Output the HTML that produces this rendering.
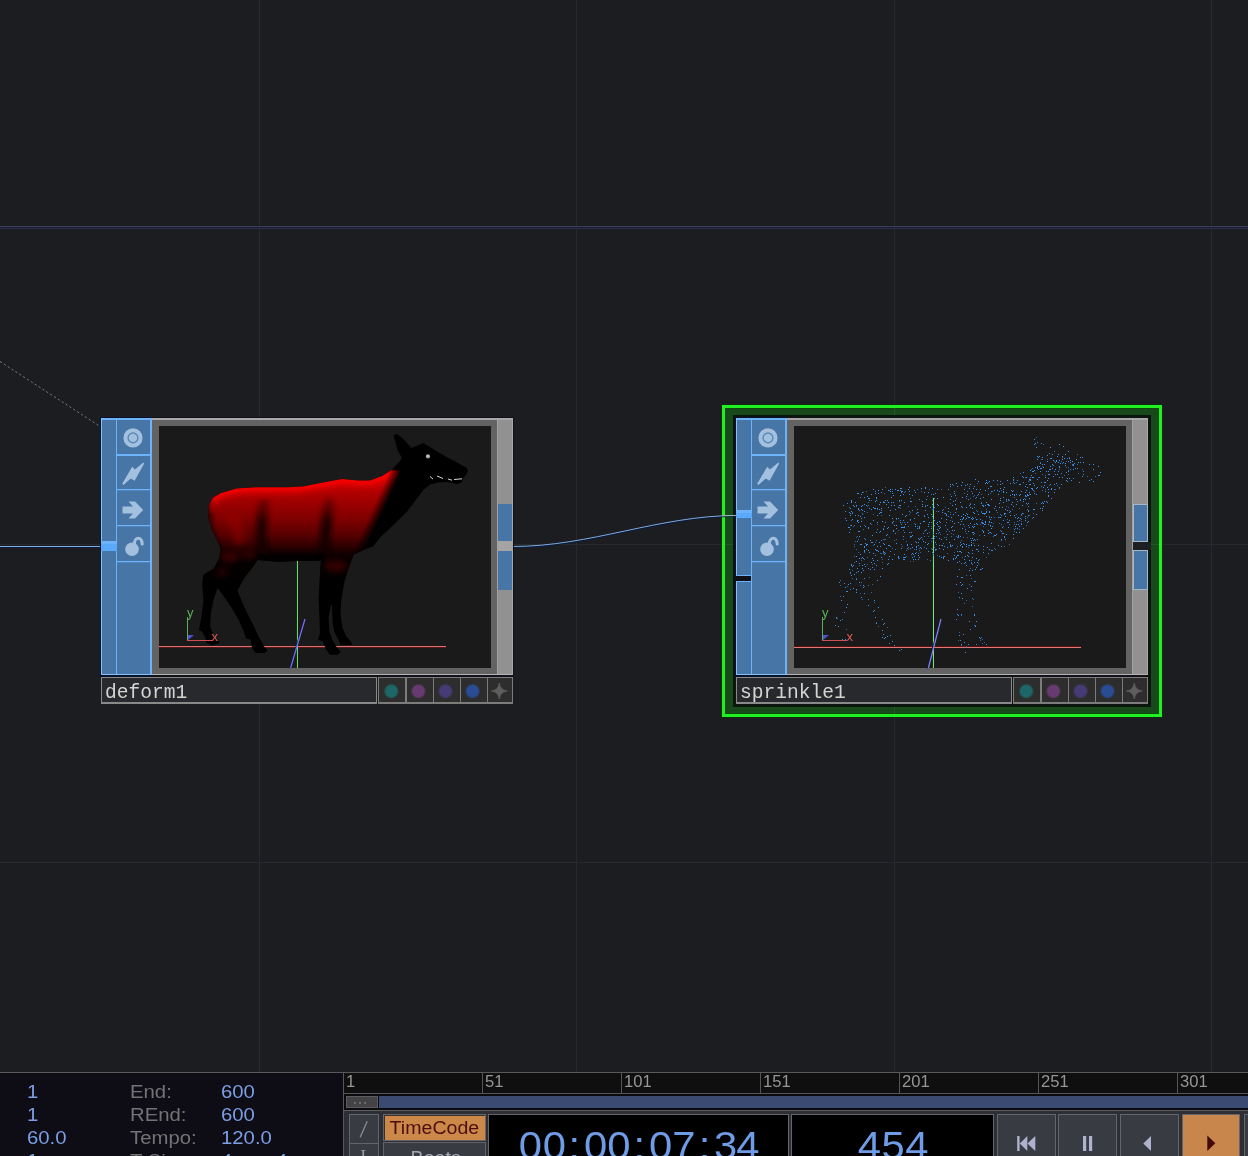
<!DOCTYPE html>
<html><head><meta charset="utf-8"><title>TouchDesigner</title>
<style>html,body{margin:0;padding:0;background:#1c1d21;overflow:hidden}svg{display:block;position:absolute;left:0;top:0}text{white-space:pre}</style>
</head><body>
<svg width="1248" height="1156" viewBox="0 0 1248 1156" shape-rendering="crispEdges">
<defs>
<linearGradient id="redv" gradientUnits="userSpaceOnUse" x1="0" y1="476" x2="0" y2="585"><stop offset="0" stop-color="#d40000"/><stop offset="0.13" stop-color="#b60000"/><stop offset="0.27" stop-color="#980000"/><stop offset="0.40" stop-color="#7e0000"/><stop offset="0.54" stop-color="#580000"/><stop offset="0.63" stop-color="#340000"/><stop offset="0.71" stop-color="#140000"/><stop offset="0.78" stop-color="#060000"/><stop offset="1" stop-color="#040000"/></linearGradient>
<linearGradient id="fadeR" gradientUnits="userSpaceOnUse" x1="371.5" y1="510.4" x2="381.5" y2="515"><stop offset="0" stop-color="#fff"/><stop offset="1" stop-color="#000"/></linearGradient>
<linearGradient id="fadeB" gradientUnits="userSpaceOnUse" x1="0" y1="560" x2="0" y2="590"><stop offset="0" stop-color="#fff"/><stop offset="1" stop-color="#000"/></linearGradient>
<linearGradient id="crz" gradientUnits="userSpaceOnUse" x1="0" y1="494" x2="0" y2="522"><stop offset="0" stop-color="#100000" stop-opacity="0"/><stop offset="1" stop-color="#100000" stop-opacity="1"/></linearGradient>
<filter id="b3" filterUnits="userSpaceOnUse" x="150" y="420" width="350" height="260"><feGaussianBlur stdDeviation="3"/></filter>
<radialGradient id="rg0"><stop offset="0" stop-color="#1d6769"/><stop offset="0.7" stop-color="#1d6769"/><stop offset="1" stop-color="#1d6769" stop-opacity="0"/></radialGradient>
<radialGradient id="rg1"><stop offset="0" stop-color="#683a72"/><stop offset="0.7" stop-color="#683a72"/><stop offset="1" stop-color="#683a72" stop-opacity="0"/></radialGradient>
<radialGradient id="rg2"><stop offset="0" stop-color="#473b76"/><stop offset="0.7" stop-color="#473b76"/><stop offset="1" stop-color="#473b76" stop-opacity="0"/></radialGradient>
<radialGradient id="rg3"><stop offset="0" stop-color="#294c94"/><stop offset="0.7" stop-color="#294c94"/><stop offset="1" stop-color="#294c94" stop-opacity="0"/></radialGradient>
<filter id="b06" x="-30%" y="-30%" width="160%" height="160%"><feGaussianBlur stdDeviation="0.7"/></filter>
<filter id="b5" x="-20%" y="-20%" width="140%" height="140%"><feGaussianBlur stdDeviation="5"/></filter>
<clipPath id="deerclip"><path d="M390.0,471.0 L382.0,476.0 L370.0,480.5 L358.0,480.5 L342.0,479.0 L323.0,482.6 L303.0,486.6 L288.4,487.3 L256.5,487.3 L236.5,488.6 L220.6,493.3 L212.6,498.0 L208.6,506.0 L208.6,518.0 L211.3,528.5 L216.6,539.0 L220.6,548.5 L219.3,557.8 L214.0,568.4 L203.3,575.0 L202.2,584.0 L203.5,600.0 L201.5,615.9 L199.6,626.5 L199.0,630.5 L201.5,631.0 L205.0,637.0 L207.0,643.0 L212.2,645.0 L219.5,643.0 L217.5,639.8 L213.0,635.0 L210.2,626.5 L210.9,613.0 L213.5,600.0 L217.5,588.0 L221.5,593.0 L230.8,606.5 L238.8,620.0 L244.0,632.0 L246.0,638.5 L250.8,639.8 L252.0,647.8 L256.0,653.0 L264.0,653.0 L267.4,650.4 L264.0,646.5 L258.8,637.0 L252.0,622.5 L244.0,606.5 L237.5,590.6 L244.0,578.6 L252.0,568.0 L257.4,560.0 L264.5,560.4 L276.5,561.8 L296.4,561.0 L321.0,560.4 L320.0,574.6 L318.6,598.5 L319.3,614.5 L320.0,633.0 L318.0,639.8 L322.6,641.0 L326.0,649.0 L330.0,654.4 L338.0,654.4 L340.5,651.7 L336.6,647.0 L332.6,641.0 L329.2,630.5 L328.6,617.0 L331.2,604.0 L332.0,606.5 L332.6,622.5 L334.6,633.0 L338.6,639.8 L340.5,645.0 L351.9,645.0 L351.2,642.4 L345.9,635.8 L342.5,627.8 L340.5,614.5 L341.2,601.0 L344.5,581.0 L349.9,564.0 L353.8,554.6 L368.5,548.0 L373.0,546.4 L381.0,536.4 L394.0,524.4 L407.5,511.0 L415.4,500.5 L423.4,490.0 L430.0,484.5 L438.0,482.5 L447.4,482.0 L456.7,484.0 L462.0,482.5 L462.7,478.5 L466.0,475.0 L468.0,471.0 L466.7,468.0 L458.0,463.0 L444.7,456.0 L431.5,448.0 L423.5,443.0 L411.5,448.0 L403.5,439.0 L397.0,434.0 L393.5,435.3 L397.5,450.0 L402.0,458.0 L399.5,462.0Z"/></clipPath>
<mask id="redmask" maskUnits="userSpaceOnUse" x="150" y="420" width="350" height="260">
<rect x="150" y="420" width="350" height="260" fill="url(#fadeR)"/>
<rect x="150" y="546" width="350" height="140" fill="url(#fadeB)" style="mix-blend-mode:multiply"/>
</mask>
</defs>
<rect width="1248" height="1156" fill="#1c1d21"/>
<rect x="259" y="0" width="1" height="1072" fill="#28292e"/>
<rect x="576" y="0" width="1" height="1072" fill="#28292e"/>
<rect x="894" y="0" width="1" height="1072" fill="#28292e"/>
<rect x="1211" y="0" width="1" height="1072" fill="#28292e"/>
<rect x="0" y="544" width="1248" height="1" fill="#28292e"/>
<rect x="0" y="862" width="1248" height="1" fill="#28292e"/>
<rect x="0" y="226" width="1248" height="1" fill="#3d3d58"/>
<rect x="0" y="227" width="1248" height="1" fill="#1b1b38"/>
<rect x="0" y="228" width="1248" height="1" fill="#2d2d48"/>
<path d="M0,361.5 L101,427" stroke="#7a7a7a" stroke-width="1" stroke-dasharray="2.2 2.4" fill="none" shape-rendering="geometricPrecision"/>
<rect x="0" y="546" width="101" height="1" fill="#78aee4"/>
<rect x="0" y="547" width="101" height="1" fill="#0a1c3e"/>
<rect x="721" y="404" width="442" height="314" fill="#0d2c10"/>
<rect x="722" y="405" width="440" height="312" fill="#20f022"/>
<rect x="725" y="408" width="434" height="306" fill="#0a4a0c"/>
<rect x="726" y="409" width="432" height="304" fill="#17491a"/>
<rect x="733" y="415" width="418" height="292" fill="#0b150d"/>
<rect x="725" y="544" width="8" height="1" fill="#27552a"/><rect x="1151" y="544" width="8" height="1" fill="#27552a"/>
<rect x="894" y="408" width="1" height="7" fill="#27552a"/><rect x="894" y="707" width="1" height="7" fill="#27552a"/>
<g shape-rendering="geometricPrecision" fill="none">
<path d="M513,547.5 C590,547.5 660,516.5 736,516.5" stroke="#0a1c3e" stroke-width="1.2"/>
<path d="M513,546.5 C590,546.5 660,515.5 736,515.5" stroke="#7caade" stroke-width="1"/>
</g>
<g transform="translate(0,0)">
<rect x="100" y="417" width="53" height="260" fill="#06122a"/>
<rect x="152" y="417" width="362" height="260" fill="#111216"/>
<rect x="152" y="418" width="361" height="257" fill="#636363"/>
<rect x="152" y="418" width="361" height="2" fill="#a8a8a8"/>
<rect x="497" y="420" width="16" height="255" fill="#919191"/>
<rect x="497" y="420" width="1" height="254" fill="#a2a2a2"/>
<rect x="152" y="674" width="361" height="1" fill="#b4b4b4"/>
<rect x="512" y="420" width="1" height="255" fill="#a8a8a8"/>
<rect x="159" y="426" width="332" height="242" fill="#1a1a1a"/>
<rect x="101" y="418" width="51" height="257" fill="#4776a6"/>
<rect x="101" y="418" width="51" height="2" fill="#6db3fb"/>
<rect x="101" y="418" width="1" height="257" fill="#86bffa"/>
<rect x="116" y="418" width="1" height="257" fill="#6db3fb"/>
<rect x="150" y="418" width="2" height="257" fill="#6db3fb"/>
<rect x="101" y="674" width="51" height="1" fill="#86bffa"/>
<rect x="117" y="454" width="33" height="2" fill="#6db3fb"/>
<rect x="117" y="489" width="33" height="1" fill="#6db3fb"/>
<rect x="117" y="490" width="33" height="1" fill="#6db3fb" opacity="0.28"/>
<rect x="117" y="525" width="33" height="1" fill="#6db3fb"/>
<rect x="117" y="526" width="33" height="1" fill="#6db3fb" opacity="0.28"/>
<rect x="117" y="561" width="33" height="1" fill="#6db3fb"/>
<rect x="117" y="562" width="33" height="1" fill="#6db3fb" opacity="0.28"/>
<g shape-rendering="geometricPrecision">
<circle cx="133" cy="437.9" r="9.6" fill="#a3c0de"/>
<circle cx="133" cy="437.9" r="4.9" fill="none" stroke="#5a89b8" stroke-width="1.4"/>
<path d="M143.3,462.4 L135,469.4 L132.2,466.8 L122.2,483.8 L123.4,485 L130.8,478.4 L134.6,480.8 L144.2,463.6 Z" fill="#a3c0de"/>
<path d="M122.5,506.5 H133 L128.5,501.5 H135 L143.2,510 L135,518.5 H128.5 L133,513.5 H122.5 Z" fill="#a3c0de"/>
<circle cx="132" cy="549.3" r="6.8" fill="#a3c0de"/>
<path d="M134.4,543.8 C134.4,536.6 142.2,536.2 142.2,544" fill="none" stroke="#a3c0de" stroke-width="3.1" stroke-linecap="round"/>
</g>
<rect x="497" y="541" width="16" height="10" fill="#a4a4a4"/>
<rect x="498" y="504" width="14" height="37" fill="#4776a6"/>
<rect x="498" y="551" width="14" height="39" fill="#4776a6"/>
<rect x="101" y="541" width="16" height="10" fill="#5aa9fd"/>
<rect x="101" y="541" width="16" height="3" fill="#6db3fb"/>
<rect x="101" y="677" width="276" height="27" fill="#898989"/>
<rect x="102" y="678" width="274" height="24" fill="#28292c"/>
<text x="105" y="698" font-family="Liberation Mono" font-size="19.6" fill="#d4d4d4">deform1</text>
<rect x="378" y="677" width="135" height="27" fill="#7c7c7c"/>
<rect x="379" y="678" width="26" height="24" fill="#2d2d2d"/>
<rect x="407" y="678" width="26" height="24" fill="#2d2d2d"/>
<rect x="434" y="678" width="26" height="24" fill="#2d2d2d"/>
<rect x="461" y="678" width="26" height="24" fill="#2d2d2d"/>
<rect x="488" y="678" width="24" height="24" fill="#2d2d2d"/>
<g shape-rendering="geometricPrecision">
<circle cx="391.3" cy="691.2" r="7.8" fill="url(#rg0)"/>
<circle cx="418.4" cy="691.2" r="7.8" fill="url(#rg1)"/>
<circle cx="445.5" cy="691.2" r="7.8" fill="url(#rg2)"/>
<circle cx="472.6" cy="691.2" r="7.8" fill="url(#rg3)"/>
<path d="M499.3,683 Q500.2,690.2 507.2,691 Q500.2,691.8 499.3,699 Q498.4,691.8 491.4,691 Q498.4,690.2 499.3,683Z" fill="#5e5e5e" stroke="#5e5e5e" stroke-width="0.8"/>
</g>
</g>
<g transform="translate(635,0)">
<rect x="100" y="417" width="53" height="260" fill="#06122a"/>
<rect x="152" y="417" width="362" height="260" fill="#111216"/>
<rect x="152" y="418" width="361" height="257" fill="#636363"/>
<rect x="152" y="418" width="361" height="2" fill="#a8a8a8"/>
<rect x="497" y="420" width="16" height="255" fill="#919191"/>
<rect x="497" y="420" width="1" height="254" fill="#a2a2a2"/>
<rect x="152" y="674" width="361" height="1" fill="#b4b4b4"/>
<rect x="512" y="420" width="1" height="255" fill="#a8a8a8"/>
<rect x="159" y="426" width="332" height="242" fill="#1a1a1a"/>
<rect x="101" y="418" width="51" height="257" fill="#4776a6"/>
<rect x="101" y="418" width="51" height="2" fill="#6db3fb"/>
<rect x="101" y="418" width="1" height="257" fill="#86bffa"/>
<rect x="116" y="418" width="1" height="257" fill="#6db3fb"/>
<rect x="150" y="418" width="2" height="257" fill="#6db3fb"/>
<rect x="101" y="674" width="51" height="1" fill="#86bffa"/>
<rect x="117" y="454" width="33" height="2" fill="#6db3fb"/>
<rect x="117" y="489" width="33" height="1" fill="#6db3fb"/>
<rect x="117" y="490" width="33" height="1" fill="#6db3fb" opacity="0.28"/>
<rect x="117" y="525" width="33" height="1" fill="#6db3fb"/>
<rect x="117" y="526" width="33" height="1" fill="#6db3fb" opacity="0.28"/>
<rect x="117" y="561" width="33" height="1" fill="#6db3fb"/>
<rect x="117" y="562" width="33" height="1" fill="#6db3fb" opacity="0.28"/>
<g shape-rendering="geometricPrecision">
<circle cx="133" cy="437.9" r="9.6" fill="#a3c0de"/>
<circle cx="133" cy="437.9" r="4.9" fill="none" stroke="#5a89b8" stroke-width="1.4"/>
<path d="M143.3,462.4 L135,469.4 L132.2,466.8 L122.2,483.8 L123.4,485 L130.8,478.4 L134.6,480.8 L144.2,463.6 Z" fill="#a3c0de"/>
<path d="M122.5,506.5 H133 L128.5,501.5 H135 L143.2,510 L135,518.5 H128.5 L133,513.5 H122.5 Z" fill="#a3c0de"/>
<circle cx="132" cy="549.3" r="6.8" fill="#a3c0de"/>
<path d="M134.4,543.8 C134.4,536.6 142.2,536.2 142.2,544" fill="none" stroke="#a3c0de" stroke-width="3.1" stroke-linecap="round"/>
</g>
<rect x="498" y="504" width="15" height="38" fill="#a9b6c4"/>
<rect x="498" y="550" width="15" height="40" fill="#a9b6c4"/>
<rect x="499" y="505" width="13" height="36" fill="#4776a6"/>
<rect x="499" y="551" width="13" height="38" fill="#4776a6"/>
<rect x="498" y="542" width="18" height="8" fill="#1d1e22"/>
<rect x="101" y="510" width="16" height="8" fill="#5aa9fd"/>
<rect x="101" y="510" width="16" height="3" fill="#6db3fb"/>
<rect x="101" y="575" width="15" height="7" fill="#6db3fb"/>
<rect x="98" y="576" width="18" height="5" fill="#0f1016"/>
<rect x="101" y="677" width="276" height="27" fill="#898989"/>
<rect x="102" y="678" width="274" height="24" fill="#28292c"/>
<text x="105" y="698" font-family="Liberation Mono" font-size="19.6" fill="#d4d4d4">sprinkle1</text>
<rect x="378" y="677" width="135" height="27" fill="#7c7c7c"/>
<rect x="379" y="678" width="26" height="24" fill="#2d2d2d"/>
<rect x="407" y="678" width="26" height="24" fill="#2d2d2d"/>
<rect x="434" y="678" width="26" height="24" fill="#2d2d2d"/>
<rect x="461" y="678" width="26" height="24" fill="#2d2d2d"/>
<rect x="488" y="678" width="24" height="24" fill="#2d2d2d"/>
<g shape-rendering="geometricPrecision">
<circle cx="391.3" cy="691.2" r="7.8" fill="url(#rg0)"/>
<circle cx="418.4" cy="691.2" r="7.8" fill="url(#rg1)"/>
<circle cx="445.5" cy="691.2" r="7.8" fill="url(#rg2)"/>
<circle cx="472.6" cy="691.2" r="7.8" fill="url(#rg3)"/>
<path d="M499.3,683 Q500.2,690.2 507.2,691 Q500.2,691.8 499.3,699 Q498.4,691.8 491.4,691 Q498.4,690.2 499.3,683Z" fill="#5e5e5e" stroke="#5e5e5e" stroke-width="0.8"/>
</g>
</g>
<g shape-rendering="geometricPrecision">
<path d="M390.0,471.0 L382.0,476.0 L370.0,480.5 L358.0,480.5 L342.0,479.0 L323.0,482.6 L303.0,486.6 L288.4,487.3 L256.5,487.3 L236.5,488.6 L220.6,493.3 L212.6,498.0 L208.6,506.0 L208.6,518.0 L211.3,528.5 L216.6,539.0 L220.6,548.5 L219.3,557.8 L214.0,568.4 L203.3,575.0 L202.2,584.0 L203.5,600.0 L201.5,615.9 L199.6,626.5 L199.0,630.5 L201.5,631.0 L205.0,637.0 L207.0,643.0 L212.2,645.0 L219.5,643.0 L217.5,639.8 L213.0,635.0 L210.2,626.5 L210.9,613.0 L213.5,600.0 L217.5,588.0 L221.5,593.0 L230.8,606.5 L238.8,620.0 L244.0,632.0 L246.0,638.5 L250.8,639.8 L252.0,647.8 L256.0,653.0 L264.0,653.0 L267.4,650.4 L264.0,646.5 L258.8,637.0 L252.0,622.5 L244.0,606.5 L237.5,590.6 L244.0,578.6 L252.0,568.0 L257.4,560.0 L264.5,560.4 L276.5,561.8 L296.4,561.0 L321.0,560.4 L320.0,574.6 L318.6,598.5 L319.3,614.5 L320.0,633.0 L318.0,639.8 L322.6,641.0 L326.0,649.0 L330.0,654.4 L338.0,654.4 L340.5,651.7 L336.6,647.0 L332.6,641.0 L329.2,630.5 L328.6,617.0 L331.2,604.0 L332.0,606.5 L332.6,622.5 L334.6,633.0 L338.6,639.8 L340.5,645.0 L351.9,645.0 L351.2,642.4 L345.9,635.8 L342.5,627.8 L340.5,614.5 L341.2,601.0 L344.5,581.0 L349.9,564.0 L353.8,554.6 L368.5,548.0 L373.0,546.4 L381.0,536.4 L394.0,524.4 L407.5,511.0 L415.4,500.5 L423.4,490.0 L430.0,484.5 L438.0,482.5 L447.4,482.0 L456.7,484.0 L462.0,482.5 L462.7,478.5 L466.0,475.0 L468.0,471.0 L466.7,468.0 L458.0,463.0 L444.7,456.0 L431.5,448.0 L423.5,443.0 L411.5,448.0 L403.5,439.0 L397.0,434.0 L393.5,435.3 L397.5,450.0 L402.0,458.0 L399.5,462.0Z" fill="#000"/>
<g clip-path="url(#deerclip)">
<g mask="url(#redmask)">
<rect x="195" y="470.5" width="210" height="114.5" fill="url(#redv)"/>
<g filter="url(#b3)" fill="none">
<path d="M391,471.5 L382,476 L370,480.5 L358,480.5 L342,479 L323,482.6 L303,486.6 L288,487.3 L256,487.3 L236,488.6 L220,493.3 L212,498 L208,506" stroke="#ff0606" stroke-width="9" stroke-opacity="0.95"/>
<path d="M208,497 C205,520 211,540 220,553" stroke="#000" stroke-width="8" stroke-opacity="0.7"/>
<path d="M265,496 C260,520 261,545 265,566" stroke="url(#crz)" stroke-width="10" stroke-opacity="0.9"/>
<path d="M330,496 C326,522 324,548 325,570" stroke="url(#crz)" stroke-width="10" stroke-opacity="0.95"/>
<path d="M258,562 H324" stroke="#000" stroke-width="16" stroke-opacity="0.85"/>
<path d="M232,515 C236,525 240,535 240,545" stroke="#b00000" stroke-width="12" stroke-opacity="0.35"/>
</g>
</g>
<g filter="url(#b3)">
<ellipse cx="230" cy="557" rx="9" ry="5" fill="#3a0000"/>
<ellipse cx="248" cy="554" rx="7" ry="4" fill="#340000"/>
<ellipse cx="336" cy="566" rx="11" ry="6" fill="#360000"/>
<ellipse cx="222" cy="572" rx="6" ry="5" fill="#200000"/>
</g>
</g>
<circle cx="428" cy="456.4" r="2.1" fill="#a4a4a4"/><circle cx="427.5" cy="456" r="0.9" fill="#d4d4d4"/>
<path d="M430,476.5 L433,479 M437,476 L443,478.5 M448,479 L452,480.2 M454,479.5 L462,478.8" stroke="#d8d8d8" stroke-width="1" fill="none"/>
</g>
<g transform="translate(0,0)">
</g>
<g transform="translate(636,0)">
</g>
<rect x="159" y="646" width="287" height="1" fill="#dc7070"/>
<rect x="159" y="647" width="287" height="1" fill="#5a1616"/>
<rect x="296" y="561" width="1" height="107" fill="#0c300c"/>
<rect x="297" y="561" width="1" height="107" fill="#78d078"/>
<path d="M304.2,619.4 L289.8,668.4" stroke="#14145a" stroke-width="1.2" fill="none" shape-rendering="geometricPrecision"/>
<path d="M305,619 L290.6,668" stroke="#7474ea" stroke-width="1.2" fill="none" shape-rendering="geometricPrecision"/>
<g shape-rendering="geometricPrecision"><clipPath id="hoof"><rect x="195" y="640" width="160" height="16"/></clipPath><path d="M390.0,471.0 L382.0,476.0 L370.0,480.5 L358.0,480.5 L342.0,479.0 L323.0,482.6 L303.0,486.6 L288.4,487.3 L256.5,487.3 L236.5,488.6 L220.6,493.3 L212.6,498.0 L208.6,506.0 L208.6,518.0 L211.3,528.5 L216.6,539.0 L220.6,548.5 L219.3,557.8 L214.0,568.4 L203.3,575.0 L202.2,584.0 L203.5,600.0 L201.5,615.9 L199.6,626.5 L199.0,630.5 L201.5,631.0 L205.0,637.0 L207.0,643.0 L212.2,645.0 L219.5,643.0 L217.5,639.8 L213.0,635.0 L210.2,626.5 L210.9,613.0 L213.5,600.0 L217.5,588.0 L221.5,593.0 L230.8,606.5 L238.8,620.0 L244.0,632.0 L246.0,638.5 L250.8,639.8 L252.0,647.8 L256.0,653.0 L264.0,653.0 L267.4,650.4 L264.0,646.5 L258.8,637.0 L252.0,622.5 L244.0,606.5 L237.5,590.6 L244.0,578.6 L252.0,568.0 L257.4,560.0 L264.5,560.4 L276.5,561.8 L296.4,561.0 L321.0,560.4 L320.0,574.6 L318.6,598.5 L319.3,614.5 L320.0,633.0 L318.0,639.8 L322.6,641.0 L326.0,649.0 L330.0,654.4 L338.0,654.4 L340.5,651.7 L336.6,647.0 L332.6,641.0 L329.2,630.5 L328.6,617.0 L331.2,604.0 L332.0,606.5 L332.6,622.5 L334.6,633.0 L338.6,639.8 L340.5,645.0 L351.9,645.0 L351.2,642.4 L345.9,635.8 L342.5,627.8 L340.5,614.5 L341.2,601.0 L344.5,581.0 L349.9,564.0 L353.8,554.6 L368.5,548.0 L373.0,546.4 L381.0,536.4 L394.0,524.4 L407.5,511.0 L415.4,500.5 L423.4,490.0 L430.0,484.5 L438.0,482.5 L447.4,482.0 L456.7,484.0 L462.0,482.5 L462.7,478.5 L466.0,475.0 L468.0,471.0 L466.7,468.0 L458.0,463.0 L444.7,456.0 L431.5,448.0 L423.5,443.0 L411.5,448.0 L403.5,439.0 L397.0,434.0 L393.5,435.3 L397.5,450.0 L402.0,458.0 L399.5,462.0Z" fill="#000" clip-path="url(#hoof)"/></g>
<rect x="187" y="617" width="1" height="24" fill="#58b058"/>
<rect x="187" y="640" width="26" height="1" fill="#d05050"/>
<path d="M188,640 L188,635 L194,635 Z" fill="#5050d0" shape-rendering="geometricPrecision"/>
<text x="187" y="617" font-family="Liberation Sans" font-size="13" fill="#58b058">y</text>
<text x="211.5" y="641.2" font-family="Liberation Sans" font-size="13" fill="#e05858">x</text>
<rect x="794" y="646" width="287" height="1" fill="#5a1010"/>
<rect x="794" y="647" width="287" height="1" fill="#e07878"/>
<rect x="932" y="498" width="1" height="170" fill="#0a360a"/>
<rect x="933" y="498" width="1" height="170" fill="#8fd48f"/>
<path d="M940.1,619.4 L927.5,668.4" stroke="#14145a" stroke-width="1.2" fill="none" shape-rendering="geometricPrecision"/>
<path d="M941,619 L928.4,668" stroke="#8484e8" stroke-width="1.2" fill="none" shape-rendering="geometricPrecision"/>
<rect x="822" y="617" width="1" height="24" fill="#58b058"/>
<rect x="822" y="640" width="26" height="1" fill="#d05050"/>
<path d="M823,640 L823,635 L829,635 Z" fill="#5050d0" shape-rendering="geometricPrecision"/>
<text x="822" y="617" font-family="Liberation Sans" font-size="13" fill="#58b058">y</text>
<text x="846.5" y="641.2" font-family="Liberation Sans" font-size="13" fill="#e05858">x</text>
<path d="M978,514h1v1h-1zM989,521h1v1h-1zM882,562h1v1h-1zM1005,516h1v1h-1zM1017,528h1v1h-1zM955,500h1v1h-1zM975,626h1v1h-1zM865,526h1v1h-1zM1037,467h1v1h-1zM956,619h1v1h-1zM910,519h1v1h-1zM1040,462h1v1h-1zM900,520h1v1h-1zM1068,451h1v1h-1zM954,555h1v1h-1zM945,513h1v1h-1zM964,563h1v1h-1zM946,515h1v1h-1zM986,644h1v1h-1zM972,570h1v1h-1zM939,521h1v1h-1zM877,508h1v1h-1zM873,489h1v1h-1zM927,514h1v1h-1zM861,509h1v1h-1zM873,553h1v1h-1zM1021,491h1v1h-1zM1043,506h1v1h-1zM1033,483h1v1h-1zM973,512h1v1h-1zM909,491h1v1h-1zM962,577h1v1h-1zM856,579h1v1h-1zM940,522h1v1h-1zM1050,466h1v1h-1zM1010,511h1v1h-1zM890,489h1v1h-1zM991,491h1v1h-1zM957,562h1v1h-1zM977,549h1v1h-1zM1048,471h1v1h-1zM961,593h1v1h-1zM921,548h1v1h-1zM862,557h1v1h-1zM900,495h1v1h-1zM998,545h1v1h-1zM971,586h1v1h-1zM977,539h1v1h-1zM903,557h1v1h-1zM1075,468h1v1h-1zM965,652h1v1h-1zM877,529h1v1h-1zM972,508h1v1h-1zM886,504h1v1h-1zM983,531h1v1h-1zM1001,546h1v1h-1zM862,492h1v1h-1zM868,527h1v1h-1zM956,508h1v1h-1zM868,550h1v1h-1zM888,502h1v1h-1zM911,544h1v1h-1zM881,510h1v1h-1zM939,545h1v1h-1zM942,510h1v1h-1zM909,487h1v1h-1zM912,535h1v1h-1zM876,532h1v1h-1zM917,512h1v1h-1zM961,544h1v1h-1zM888,545h1v1h-1zM858,522h1v1h-1zM991,550h1v1h-1zM938,505h1v1h-1zM1098,466h1v1h-1zM1052,464h1v1h-1zM974,545h1v1h-1zM1020,484h1v1h-1zM1032,489h1v1h-1zM1030,479h1v1h-1zM966,518h1v1h-1zM962,584h1v1h-1zM915,559h1v1h-1zM912,547h1v1h-1zM958,536h1v1h-1zM957,614h1v1h-1zM954,493h1v1h-1zM970,629h1v1h-1zM955,500h1v1h-1zM871,509h1v1h-1zM1059,460h1v1h-1zM934,520h1v1h-1zM931,528h1v1h-1zM901,492h1v1h-1zM1083,462h1v1h-1zM926,499h1v1h-1zM914,556h1v1h-1zM858,509h1v1h-1zM903,559h1v1h-1zM945,525h1v1h-1zM975,517h1v1h-1zM867,544h1v1h-1zM892,493h1v1h-1zM900,522h1v1h-1zM961,563h1v1h-1zM875,549h1v1h-1zM1044,485h1v1h-1zM990,519h1v1h-1zM961,485h1v1h-1zM1023,501h1v1h-1zM1015,526h1v1h-1zM1054,484h1v1h-1zM894,525h1v1h-1zM873,520h1v1h-1zM934,507h1v1h-1zM909,511h1v1h-1zM961,516h1v1h-1zM999,491h1v1h-1zM1026,503h1v1h-1zM961,644h1v1h-1zM937,489h1v1h-1zM949,542h1v1h-1zM1083,474h1v1h-1zM922,504h1v1h-1zM1036,488h1v1h-1zM982,505h1v1h-1zM896,525h1v1h-1zM986,516h1v1h-1zM1032,477h1v1h-1zM900,488h1v1h-1zM989,505h1v1h-1zM970,484h1v1h-1zM961,614h1v1h-1zM954,491h1v1h-1zM862,565h1v1h-1zM1000,481h1v1h-1zM888,490h1v1h-1zM883,502h1v1h-1zM861,521h1v1h-1zM1021,524h1v1h-1zM910,501h1v1h-1zM986,512h1v1h-1zM1001,515h1v1h-1zM910,548h1v1h-1zM1082,457h1v1h-1zM1055,469h1v1h-1zM1045,482h1v1h-1zM1057,474h1v1h-1zM892,522h1v1h-1zM973,518h1v1h-1zM1037,442h1v1h-1zM865,566h1v1h-1zM954,530h1v1h-1zM965,485h1v1h-1zM868,528h1v1h-1zM858,531h1v1h-1zM969,517h1v1h-1zM1089,464h1v1h-1zM1053,476h1v1h-1zM878,607h1v1h-1zM851,511h1v1h-1zM1037,468h1v1h-1zM1053,465h1v1h-1zM890,491h1v1h-1zM970,504h1v1h-1zM864,550h1v1h-1zM1005,513h1v1h-1zM1003,520h1v1h-1zM1048,492h1v1h-1zM1034,444h1v1h-1zM1012,502h1v1h-1zM874,569h1v1h-1zM950,546h1v1h-1zM1074,463h1v1h-1zM1031,488h1v1h-1zM976,523h1v1h-1zM970,575h1v1h-1zM880,502h1v1h-1zM959,597h1v1h-1zM1025,492h1v1h-1zM982,530h1v1h-1zM1093,481h1v1h-1zM851,564h1v1h-1zM1003,497h1v1h-1zM1037,479h1v1h-1zM919,527h1v1h-1zM932,504h1v1h-1zM978,481h1v1h-1zM1065,454h1v1h-1zM1054,471h1v1h-1zM883,543h1v1h-1zM929,522h1v1h-1zM968,517h1v1h-1zM957,551h1v1h-1zM1007,510h1v1h-1zM1033,471h1v1h-1zM885,500h1v1h-1zM900,505h1v1h-1zM861,518h1v1h-1zM1004,536h1v1h-1zM872,567h1v1h-1zM1006,534h1v1h-1zM860,526h1v1h-1zM1003,489h1v1h-1zM947,534h1v1h-1zM1001,524h1v1h-1zM988,553h1v1h-1zM974,524h1v1h-1zM1089,480h1v1h-1zM907,522h1v1h-1zM928,492h1v1h-1zM868,605h1v1h-1zM1004,537h1v1h-1zM985,483h1v1h-1zM913,554h1v1h-1zM905,516h1v1h-1zM902,527h1v1h-1zM1028,495h1v1h-1zM899,500h1v1h-1zM962,528h1v1h-1zM1063,446h1v1h-1zM1044,464h1v1h-1zM1042,510h1v1h-1zM1046,471h1v1h-1zM1059,477h1v1h-1zM871,542h1v1h-1zM872,542h1v1h-1zM968,552h1v1h-1zM854,574h1v1h-1zM971,540h1v1h-1zM932,538h1v1h-1zM951,527h1v1h-1zM942,545h1v1h-1zM907,545h1v1h-1zM919,499h1v1h-1zM885,637h1v1h-1zM1017,480h1v1h-1zM1013,534h1v1h-1zM1039,456h1v1h-1zM1010,515h1v1h-1zM985,490h1v1h-1zM915,526h1v1h-1zM919,528h1v1h-1zM1007,480h1v1h-1zM1027,487h1v1h-1zM1031,475h1v1h-1zM847,604h1v1h-1zM856,572h1v1h-1zM855,502h1v1h-1zM1030,470h1v1h-1zM850,515h1v1h-1zM988,530h1v1h-1zM946,519h1v1h-1zM917,528h1v1h-1zM904,527h1v1h-1zM856,556h1v1h-1zM1048,478h1v1h-1zM889,490h1v1h-1zM974,539h1v1h-1zM1022,513h1v1h-1zM985,522h1v1h-1zM876,565h1v1h-1zM926,548h1v1h-1zM964,559h1v1h-1zM851,565h1v1h-1zM939,532h1v1h-1zM846,607h1v1h-1zM1016,499h1v1h-1zM862,505h1v1h-1zM1026,477h1v1h-1zM1073,464h1v1h-1zM1003,533h1v1h-1zM905,524h1v1h-1zM875,493h1v1h-1zM879,542h1v1h-1zM1013,480h1v1h-1zM962,497h1v1h-1zM860,497h1v1h-1zM1029,498h1v1h-1zM883,529h1v1h-1zM1079,482h1v1h-1zM857,568h1v1h-1zM967,494h1v1h-1zM877,515h1v1h-1zM973,532h1v1h-1zM1025,518h1v1h-1zM1036,447h1v1h-1zM972,550h1v1h-1zM1022,476h1v1h-1zM989,549h1v1h-1zM966,544h1v1h-1zM873,560h1v1h-1zM1034,470h1v1h-1zM938,526h1v1h-1zM1042,508h1v1h-1zM898,507h1v1h-1zM901,527h1v1h-1zM1004,514h1v1h-1zM950,545h1v1h-1zM1006,492h1v1h-1zM1016,494h1v1h-1zM979,637h1v1h-1zM901,548h1v1h-1zM911,501h1v1h-1zM972,493h1v1h-1zM959,551h1v1h-1zM869,498h1v1h-1zM943,497h1v1h-1zM981,569h1v1h-1zM960,502h1v1h-1zM971,518h1v1h-1zM898,556h1v1h-1zM966,496h1v1h-1zM1041,468h1v1h-1zM938,530h1v1h-1zM894,645h1v1h-1zM875,508h1v1h-1zM1080,462h1v1h-1zM991,543h1v1h-1zM936,533h1v1h-1zM939,556h1v1h-1zM937,504h1v1h-1zM968,531h1v1h-1zM883,501h1v1h-1zM873,560h1v1h-1zM1091,479h1v1h-1zM860,516h1v1h-1zM941,557h1v1h-1zM879,504h1v1h-1zM876,497h1v1h-1zM971,545h1v1h-1zM1013,477h1v1h-1zM967,555h1v1h-1zM988,524h1v1h-1zM1038,457h1v1h-1zM974,615h1v1h-1zM1050,447h1v1h-1zM927,533h1v1h-1zM1000,488h1v1h-1zM845,639h1v1h-1zM893,502h1v1h-1zM1047,487h1v1h-1zM880,512h1v1h-1zM912,557h1v1h-1zM864,551h1v1h-1zM937,522h1v1h-1zM858,493h1v1h-1zM1058,462h1v1h-1zM1050,469h1v1h-1zM889,643h1v1h-1zM895,533h1v1h-1zM932,488h1v1h-1zM997,480h1v1h-1zM1068,461h1v1h-1zM972,553h1v1h-1zM986,502h1v1h-1zM985,513h1v1h-1zM968,499h1v1h-1zM851,502h1v1h-1zM1026,496h1v1h-1zM1065,463h1v1h-1zM928,524h1v1h-1zM887,500h1v1h-1zM882,619h1v1h-1zM1026,490h1v1h-1zM890,635h1v1h-1zM1002,533h1v1h-1zM904,554h1v1h-1zM980,489h1v1h-1zM849,512h1v1h-1zM972,532h1v1h-1zM872,558h1v1h-1zM995,535h1v1h-1zM864,497h1v1h-1zM921,537h1v1h-1zM856,592h1v1h-1zM965,529h1v1h-1zM885,553h1v1h-1zM901,488h1v1h-1zM1083,471h1v1h-1zM933,555h1v1h-1zM966,544h1v1h-1zM876,500h1v1h-1zM972,526h1v1h-1zM925,530h1v1h-1zM953,558h1v1h-1zM856,505h1v1h-1zM850,583h1v1h-1zM913,559h1v1h-1zM1008,499h1v1h-1zM1016,532h1v1h-1zM990,525h1v1h-1zM976,558h1v1h-1zM882,630h1v1h-1zM976,489h1v1h-1zM965,556h1v1h-1zM864,547h1v1h-1zM1037,459h1v1h-1zM1042,464h1v1h-1zM993,480h1v1h-1zM1068,471h1v1h-1zM1034,509h1v1h-1zM1056,461h1v1h-1zM860,554h1v1h-1zM1050,458h1v1h-1zM1049,474h1v1h-1zM983,497h1v1h-1zM1018,517h1v1h-1zM874,544h1v1h-1zM939,538h1v1h-1zM854,506h1v1h-1zM879,513h1v1h-1zM959,561h1v1h-1zM938,511h1v1h-1zM1014,494h1v1h-1zM907,544h1v1h-1zM904,559h1v1h-1zM976,644h1v1h-1zM1004,513h1v1h-1zM1017,501h1v1h-1zM982,523h1v1h-1zM850,508h1v1h-1zM963,514h1v1h-1zM835,625h1v1h-1zM953,559h1v1h-1zM851,500h1v1h-1zM878,493h1v1h-1zM1023,482h1v1h-1zM884,552h1v1h-1zM1002,507h1v1h-1zM966,565h1v1h-1zM903,536h1v1h-1zM849,569h1v1h-1zM1028,506h1v1h-1zM978,563h1v1h-1zM995,506h1v1h-1zM1033,490h1v1h-1zM1042,502h1v1h-1zM955,495h1v1h-1zM968,556h1v1h-1zM1043,487h1v1h-1zM1005,509h1v1h-1zM1007,522h1v1h-1zM985,524h1v1h-1zM1002,483h1v1h-1zM901,491h1v1h-1zM950,484h1v1h-1zM1006,499h1v1h-1zM923,541h1v1h-1zM1073,469h1v1h-1zM1071,480h1v1h-1zM883,624h1v1h-1zM858,508h1v1h-1zM896,528h1v1h-1zM1070,460h1v1h-1zM864,511h1v1h-1zM1030,494h1v1h-1zM881,492h1v1h-1zM970,523h1v1h-1zM983,513h1v1h-1zM1027,522h1v1h-1zM919,526h1v1h-1zM937,524h1v1h-1zM998,517h1v1h-1zM1033,517h1v1h-1zM1025,520h1v1h-1zM975,569h1v1h-1zM1016,504h1v1h-1zM961,593h1v1h-1zM962,482h1v1h-1zM976,549h1v1h-1zM845,518h1v1h-1zM974,533h1v1h-1zM857,521h1v1h-1zM954,539h1v1h-1zM974,486h1v1h-1zM933,508h1v1h-1zM888,559h1v1h-1zM1027,494h1v1h-1zM1058,454h1v1h-1zM888,527h1v1h-1zM953,514h1v1h-1zM1025,499h1v1h-1zM1082,476h1v1h-1zM1025,516h1v1h-1zM1013,506h1v1h-1zM936,549h1v1h-1zM958,535h1v1h-1zM966,546h1v1h-1zM844,583h1v1h-1zM848,584h1v1h-1zM1019,526h1v1h-1zM873,507h1v1h-1zM904,502h1v1h-1zM983,546h1v1h-1zM934,536h1v1h-1zM965,562h1v1h-1zM887,636h1v1h-1zM847,503h1v1h-1zM977,524h1v1h-1zM985,505h1v1h-1zM853,565h1v1h-1zM882,637h1v1h-1zM1059,466h1v1h-1zM1011,490h1v1h-1zM919,557h1v1h-1zM874,610h1v1h-1zM894,554h1v1h-1zM859,536h1v1h-1zM1056,460h1v1h-1zM912,510h1v1h-1zM1061,484h1v1h-1zM923,533h1v1h-1zM994,535h1v1h-1zM989,511h1v1h-1zM865,543h1v1h-1zM978,545h1v1h-1zM1019,484h1v1h-1zM1035,467h1v1h-1zM939,548h1v1h-1zM856,561h1v1h-1zM963,543h1v1h-1zM957,486h1v1h-1zM996,534h1v1h-1zM1000,498h1v1h-1zM857,493h1v1h-1zM1055,474h1v1h-1zM968,644h1v1h-1zM1099,475h1v1h-1zM877,550h1v1h-1zM1051,489h1v1h-1zM972,517h1v1h-1zM1001,531h1v1h-1zM935,549h1v1h-1zM967,514h1v1h-1zM983,532h1v1h-1zM1073,465h1v1h-1zM846,520h1v1h-1zM912,553h1v1h-1zM1015,517h1v1h-1zM1019,495h1v1h-1zM877,560h1v1h-1zM1032,471h1v1h-1zM914,518h1v1h-1zM884,502h1v1h-1zM903,520h1v1h-1zM1043,503h1v1h-1zM874,600h1v1h-1zM1036,494h1v1h-1zM976,497h1v1h-1zM1003,491h1v1h-1zM1041,443h1v1h-1zM986,511h1v1h-1zM1016,524h1v1h-1zM1051,458h1v1h-1zM1033,509h1v1h-1zM974,581h1v1h-1zM869,508h1v1h-1zM851,525h1v1h-1zM969,621h1v1h-1zM989,522h1v1h-1zM988,494h1v1h-1zM1059,467h1v1h-1zM1070,462h1v1h-1zM998,494h1v1h-1zM852,566h1v1h-1zM859,582h1v1h-1zM871,494h1v1h-1zM849,532h1v1h-1zM925,506h1v1h-1zM986,482h1v1h-1zM1047,480h1v1h-1zM969,527h1v1h-1zM850,572h1v1h-1zM991,522h1v1h-1zM971,563h1v1h-1zM956,584h1v1h-1zM956,509h1v1h-1zM885,522h1v1h-1zM1023,477h1v1h-1zM905,557h1v1h-1zM1003,492h1v1h-1zM881,512h1v1h-1zM1055,462h1v1h-1zM863,558h1v1h-1zM1060,463h1v1h-1zM991,517h1v1h-1zM836,617h1v1h-1zM853,505h1v1h-1zM887,534h1v1h-1zM1025,486h1v1h-1zM1037,456h1v1h-1zM877,546h1v1h-1zM969,570h1v1h-1zM980,498h1v1h-1zM1034,439h1v1h-1zM1062,456h1v1h-1zM932,500h1v1h-1zM1039,466h1v1h-1zM973,534h1v1h-1zM901,500h1v1h-1zM927,505h1v1h-1zM859,531h1v1h-1zM1036,494h1v1h-1zM901,524h1v1h-1zM932,552h1v1h-1zM1093,469h1v1h-1zM891,497h1v1h-1zM1100,472h1v1h-1zM900,490h1v1h-1zM1020,500h1v1h-1zM966,647h1v1h-1zM915,524h1v1h-1zM1019,532h1v1h-1zM1056,483h1v1h-1zM1014,495h1v1h-1zM1077,468h1v1h-1zM987,483h1v1h-1zM1063,462h1v1h-1zM1045,489h1v1h-1zM932,549h1v1h-1zM1048,496h1v1h-1zM892,518h1v1h-1zM865,539h1v1h-1zM852,513h1v1h-1zM960,640h1v1h-1zM1064,458h1v1h-1zM1066,480h1v1h-1zM955,504h1v1h-1zM896,543h1v1h-1zM873,611h1v1h-1zM962,546h1v1h-1zM956,483h1v1h-1zM943,509h1v1h-1zM997,490h1v1h-1zM956,557h1v1h-1zM974,562h1v1h-1zM991,533h1v1h-1zM976,621h1v1h-1zM932,549h1v1h-1zM960,582h1v1h-1zM896,528h1v1h-1zM1091,479h1v1h-1zM1040,462h1v1h-1zM870,523h1v1h-1zM989,512h1v1h-1zM881,540h1v1h-1zM914,490h1v1h-1zM1029,494h1v1h-1zM974,504h1v1h-1zM946,539h1v1h-1zM858,571h1v1h-1zM1021,491h1v1h-1zM925,542h1v1h-1zM884,638h1v1h-1zM1020,518h1v1h-1zM1026,484h1v1h-1zM859,563h1v1h-1zM1004,487h1v1h-1zM903,527h1v1h-1zM1012,491h1v1h-1zM1047,502h1v1h-1zM866,545h1v1h-1zM974,513h1v1h-1zM1042,457h1v1h-1zM852,519h1v1h-1zM964,489h1v1h-1zM1013,482h1v1h-1zM919,539h1v1h-1zM933,532h1v1h-1zM1078,462h1v1h-1zM1000,500h1v1h-1zM857,520h1v1h-1zM1040,463h1v1h-1zM878,551h1v1h-1zM1058,471h1v1h-1zM948,508h1v1h-1zM961,644h1v1h-1zM911,536h1v1h-1zM900,490h1v1h-1zM1034,509h1v1h-1zM884,526h1v1h-1zM1054,492h1v1h-1zM932,516h1v1h-1zM928,517h1v1h-1zM1037,487h1v1h-1zM869,552h1v1h-1zM956,508h1v1h-1zM1067,481h1v1h-1zM925,488h1v1h-1zM861,506h1v1h-1zM1033,477h1v1h-1zM958,522h1v1h-1zM973,540h1v1h-1zM1013,479h1v1h-1zM931,514h1v1h-1zM974,614h1v1h-1zM884,554h1v1h-1zM883,634h1v1h-1zM903,494h1v1h-1zM947,547h1v1h-1zM897,490h1v1h-1zM888,563h1v1h-1zM872,535h1v1h-1zM877,524h1v1h-1zM1000,500h1v1h-1zM918,545h1v1h-1zM883,539h1v1h-1zM964,642h1v1h-1zM887,564h1v1h-1zM853,588h1v1h-1zM942,512h1v1h-1zM948,511h1v1h-1zM1019,520h1v1h-1zM950,499h1v1h-1zM873,514h1v1h-1zM981,522h1v1h-1zM963,543h1v1h-1zM928,551h1v1h-1zM962,507h1v1h-1zM1045,491h1v1h-1zM933,519h1v1h-1zM978,494h1v1h-1zM882,568h1v1h-1zM950,520h1v1h-1zM1023,472h1v1h-1zM988,533h1v1h-1zM924,521h1v1h-1zM999,503h1v1h-1zM935,493h1v1h-1zM876,623h1v1h-1zM1037,466h1v1h-1zM861,494h1v1h-1zM1010,495h1v1h-1zM948,560h1v1h-1zM1005,516h1v1h-1zM958,537h1v1h-1zM1053,460h1v1h-1zM884,544h1v1h-1zM1045,489h1v1h-1zM1034,485h1v1h-1zM958,615h1v1h-1zM1082,469h1v1h-1zM983,523h1v1h-1zM960,542h1v1h-1zM906,515h1v1h-1zM871,562h1v1h-1zM981,503h1v1h-1zM867,496h1v1h-1zM889,545h1v1h-1zM918,559h1v1h-1zM1057,456h1v1h-1zM1034,493h1v1h-1zM873,514h1v1h-1zM982,513h1v1h-1zM874,563h1v1h-1zM1049,469h1v1h-1zM969,560h1v1h-1zM984,524h1v1h-1zM849,527h1v1h-1zM962,519h1v1h-1zM1008,527h1v1h-1zM916,546h1v1h-1zM875,501h1v1h-1zM1023,528h1v1h-1zM970,507h1v1h-1zM861,597h1v1h-1zM1014,529h1v1h-1zM893,521h1v1h-1zM924,492h1v1h-1zM1014,483h1v1h-1zM860,544h1v1h-1zM1051,498h1v1h-1zM846,591h1v1h-1zM864,504h1v1h-1zM1028,510h1v1h-1zM1021,514h1v1h-1zM1025,495h1v1h-1zM864,517h1v1h-1zM845,511h1v1h-1zM973,540h1v1h-1zM924,516h1v1h-1zM971,563h1v1h-1zM893,495h1v1h-1zM969,545h1v1h-1zM883,551h1v1h-1zM973,488h1v1h-1zM934,498h1v1h-1zM1030,480h1v1h-1zM955,512h1v1h-1zM916,513h1v1h-1zM1020,494h1v1h-1zM850,513h1v1h-1zM975,581h1v1h-1zM1050,484h1v1h-1zM965,515h1v1h-1zM906,541h1v1h-1zM952,526h1v1h-1zM952,521h1v1h-1zM994,490h1v1h-1zM839,582h1v1h-1zM988,504h1v1h-1zM843,505h1v1h-1zM891,502h1v1h-1zM946,514h1v1h-1zM1076,459h1v1h-1zM858,515h1v1h-1zM950,545h1v1h-1zM971,542h1v1h-1zM930,507h1v1h-1zM864,578h1v1h-1zM922,506h1v1h-1zM931,522h1v1h-1zM877,580h1v1h-1zM954,523h1v1h-1zM880,576h1v1h-1zM870,569h1v1h-1zM880,546h1v1h-1zM918,555h1v1h-1zM870,540h1v1h-1zM980,569h1v1h-1zM893,531h1v1h-1zM1036,514h1v1h-1zM862,568h1v1h-1zM842,639h1v1h-1zM1029,492h1v1h-1zM1061,473h1v1h-1zM876,498h1v1h-1zM1048,495h1v1h-1zM1030,484h1v1h-1zM982,568h1v1h-1zM1065,465h1v1h-1zM971,544h1v1h-1zM841,600h1v1h-1zM890,510h1v1h-1zM943,549h1v1h-1zM960,545h1v1h-1zM1045,477h1v1h-1zM1028,511h1v1h-1zM1052,454h1v1h-1zM963,517h1v1h-1zM989,481h1v1h-1zM1048,489h1v1h-1zM944,546h1v1h-1zM961,552h1v1h-1zM952,545h1v1h-1zM978,481h1v1h-1zM1044,501h1v1h-1zM1029,484h1v1h-1zM933,539h1v1h-1zM851,575h1v1h-1zM875,555h1v1h-1zM857,541h1v1h-1zM901,500h1v1h-1zM958,515h1v1h-1zM863,587h1v1h-1zM952,530h1v1h-1zM984,535h1v1h-1zM988,488h1v1h-1zM855,515h1v1h-1zM1029,479h1v1h-1zM952,505h1v1h-1zM994,508h1v1h-1zM1046,501h1v1h-1zM1028,515h1v1h-1zM882,521h1v1h-1zM968,525h1v1h-1zM866,549h1v1h-1zM937,529h1v1h-1zM1069,478h1v1h-1zM973,527h1v1h-1zM898,557h1v1h-1zM886,548h1v1h-1zM1059,444h1v1h-1zM1027,495h1v1h-1zM951,496h1v1h-1zM991,499h1v1h-1zM967,484h1v1h-1zM864,546h1v1h-1zM1066,472h1v1h-1zM886,535h1v1h-1zM961,577h1v1h-1zM948,516h1v1h-1zM1008,522h1v1h-1zM987,547h1v1h-1zM1059,487h1v1h-1zM918,515h1v1h-1zM986,480h1v1h-1zM915,492h1v1h-1zM951,517h1v1h-1zM895,489h1v1h-1zM969,488h1v1h-1zM1072,461h1v1h-1zM1052,468h1v1h-1zM979,492h1v1h-1zM863,570h1v1h-1zM1051,488h1v1h-1zM966,507h1v1h-1zM963,524h1v1h-1zM991,486h1v1h-1zM916,542h1v1h-1zM969,505h1v1h-1zM888,507h1v1h-1zM848,527h1v1h-1zM935,542h1v1h-1zM1012,494h1v1h-1zM989,517h1v1h-1zM999,507h1v1h-1zM980,638h1v1h-1zM957,555h1v1h-1zM1001,539h1v1h-1zM898,518h1v1h-1zM976,567h1v1h-1zM972,519h1v1h-1zM881,557h1v1h-1zM869,500h1v1h-1zM892,641h1v1h-1zM908,489h1v1h-1zM862,510h1v1h-1zM1070,469h1v1h-1zM925,487h1v1h-1zM937,498h1v1h-1zM891,505h1v1h-1zM1005,539h1v1h-1zM902,491h1v1h-1zM861,544h1v1h-1zM1040,468h1v1h-1zM963,518h1v1h-1zM916,547h1v1h-1zM911,532h1v1h-1zM959,635h1v1h-1zM1093,464h1v1h-1zM840,620h1v1h-1zM960,524h1v1h-1zM934,525h1v1h-1zM990,532h1v1h-1zM928,526h1v1h-1zM948,489h1v1h-1zM918,542h1v1h-1zM978,551h1v1h-1zM1010,483h1v1h-1zM843,596h1v1h-1zM909,532h1v1h-1zM1009,520h1v1h-1zM1023,499h1v1h-1zM1028,511h1v1h-1zM980,519h1v1h-1zM1041,503h1v1h-1zM1041,482h1v1h-1zM1013,479h1v1h-1zM977,565h1v1h-1zM1030,477h1v1h-1zM917,509h1v1h-1zM859,510h1v1h-1zM972,493h1v1h-1zM922,504h1v1h-1zM887,528h1v1h-1zM882,489h1v1h-1zM989,532h1v1h-1zM916,549h1v1h-1zM961,506h1v1h-1zM928,543h1v1h-1zM1002,527h1v1h-1zM1098,475h1v1h-1zM1047,455h1v1h-1zM1073,478h1v1h-1zM1028,503h1v1h-1zM1018,524h1v1h-1zM1035,443h1v1h-1zM856,589h1v1h-1zM845,587h1v1h-1zM957,576h1v1h-1zM889,556h1v1h-1zM879,509h1v1h-1zM972,557h1v1h-1zM966,600h1v1h-1zM868,527h1v1h-1zM947,529h1v1h-1zM984,513h1v1h-1zM939,528h1v1h-1zM1028,521h1v1h-1zM838,626h1v1h-1zM910,536h1v1h-1zM898,490h1v1h-1zM960,519h1v1h-1zM864,564h1v1h-1zM1013,538h1v1h-1zM992,526h1v1h-1zM895,509h1v1h-1zM988,505h1v1h-1zM1005,509h1v1h-1zM875,491h1v1h-1zM923,521h1v1h-1zM961,521h1v1h-1zM901,649h1v1h-1zM1017,518h1v1h-1zM975,479h1v1h-1zM881,508h1v1h-1zM921,488h1v1h-1zM912,495h1v1h-1zM878,490h1v1h-1zM991,528h1v1h-1zM899,650h1v1h-1zM1062,459h1v1h-1zM1009,512h1v1h-1zM909,494h1v1h-1zM1069,458h1v1h-1zM972,538h1v1h-1zM868,498h1v1h-1zM863,585h1v1h-1zM1011,504h1v1h-1zM937,555h1v1h-1zM982,522h1v1h-1zM1049,453h1v1h-1zM920,523h1v1h-1zM933,509h1v1h-1zM875,617h1v1h-1zM920,547h1v1h-1zM931,494h1v1h-1zM844,612h1v1h-1zM983,552h1v1h-1zM944,556h1v1h-1zM1043,467h1v1h-1zM876,550h1v1h-1zM941,539h1v1h-1zM955,558h1v1h-1zM874,508h1v1h-1zM987,504h1v1h-1zM904,532h1v1h-1zM953,501h1v1h-1zM996,510h1v1h-1zM960,536h1v1h-1zM959,569h1v1h-1zM884,623h1v1h-1zM922,501h1v1h-1zM904,557h1v1h-1zM902,514h1v1h-1zM990,486h1v1h-1zM957,609h1v1h-1zM907,548h1v1h-1zM943,557h1v1h-1zM1062,477h1v1h-1zM978,560h1v1h-1zM950,486h1v1h-1zM893,530h1v1h-1zM918,538h1v1h-1zM877,522h1v1h-1zM1022,505h1v1h-1zM1048,474h1v1h-1zM861,572h1v1h-1zM1080,457h1v1h-1zM1014,515h1v1h-1zM868,568h1v1h-1zM961,585h1v1h-1zM958,555h1v1h-1zM983,506h1v1h-1zM1032,488h1v1h-1zM1067,478h1v1h-1zM851,501h1v1h-1zM962,598h1v1h-1zM1051,458h1v1h-1zM974,526h1v1h-1zM1003,502h1v1h-1zM925,510h1v1h-1zM864,593h1v1h-1zM866,505h1v1h-1zM894,505h1v1h-1zM850,529h1v1h-1zM967,588h1v1h-1zM1040,508h1v1h-1zM943,558h1v1h-1zM847,591h1v1h-1zM1000,484h1v1h-1zM985,521h1v1h-1zM915,553h1v1h-1zM963,634h1v1h-1zM1047,461h1v1h-1zM899,505h1v1h-1zM945,513h1v1h-1zM866,544h1v1h-1zM1000,517h1v1h-1zM1040,471h1v1h-1zM896,518h1v1h-1zM890,551h1v1h-1zM859,558h1v1h-1zM1041,486h1v1h-1zM992,550h1v1h-1zM940,527h1v1h-1zM892,559h1v1h-1zM952,484h1v1h-1zM1044,482h1v1h-1zM960,551h1v1h-1zM880,531h1v1h-1zM927,544h1v1h-1zM976,519h1v1h-1zM909,511h1v1h-1zM889,515h1v1h-1zM941,518h1v1h-1zM977,562h1v1h-1zM933,494h1v1h-1z" fill="#3b8ee6"/>
<path d="M906,541h1v1h-1zM854,525h1v1h-1zM1047,459h1v1h-1zM878,626h1v1h-1zM1066,467h1v1h-1zM963,537h1v1h-1zM863,492h1v1h-1zM970,568h1v1h-1zM1068,470h1v1h-1zM971,562h1v1h-1zM957,537h1v1h-1zM871,592h1v1h-1zM938,533h1v1h-1zM1077,464h1v1h-1zM956,548h1v1h-1zM1045,475h1v1h-1zM989,532h1v1h-1zM1066,461h1v1h-1zM904,492h1v1h-1zM1067,458h1v1h-1zM981,512h1v1h-1zM898,558h1v1h-1zM882,562h1v1h-1zM920,538h1v1h-1zM970,503h1v1h-1zM902,546h1v1h-1zM977,483h1v1h-1zM929,489h1v1h-1zM924,531h1v1h-1zM973,496h1v1h-1zM958,640h1v1h-1zM970,538h1v1h-1zM1009,544h1v1h-1zM857,536h1v1h-1zM1069,457h1v1h-1zM980,640h1v1h-1zM908,526h1v1h-1zM1026,484h1v1h-1zM876,540h1v1h-1zM1043,444h1v1h-1zM1001,540h1v1h-1zM868,502h1v1h-1zM971,590h1v1h-1zM937,555h1v1h-1zM944,513h1v1h-1zM852,512h1v1h-1zM967,491h1v1h-1zM908,547h1v1h-1zM862,513h1v1h-1zM854,544h1v1h-1zM931,494h1v1h-1zM1007,519h1v1h-1zM975,625h1v1h-1zM931,538h1v1h-1zM1095,476h1v1h-1zM1032,468h1v1h-1zM925,505h1v1h-1zM908,549h1v1h-1zM873,545h1v1h-1zM904,526h1v1h-1zM946,522h1v1h-1zM974,495h1v1h-1zM981,511h1v1h-1zM1016,514h1v1h-1zM950,503h1v1h-1zM977,495h1v1h-1zM1014,524h1v1h-1zM1024,498h1v1h-1zM956,556h1v1h-1zM1012,509h1v1h-1zM872,584h1v1h-1zM1015,528h1v1h-1zM934,547h1v1h-1zM868,585h1v1h-1zM1000,530h1v1h-1zM981,494h1v1h-1zM913,561h1v1h-1zM983,505h1v1h-1zM855,541h1v1h-1zM883,501h1v1h-1zM1049,485h1v1h-1zM856,590h1v1h-1zM864,538h1v1h-1zM983,526h1v1h-1zM927,496h1v1h-1zM1031,469h1v1h-1zM892,523h1v1h-1zM854,562h1v1h-1zM1017,521h1v1h-1zM982,643h1v1h-1zM979,535h1v1h-1zM864,586h1v1h-1zM858,552h1v1h-1zM1064,475h1v1h-1zM924,547h1v1h-1zM939,526h1v1h-1zM894,540h1v1h-1zM1023,513h1v1h-1zM911,554h1v1h-1zM953,485h1v1h-1zM981,502h1v1h-1zM850,525h1v1h-1zM910,537h1v1h-1zM934,538h1v1h-1zM1059,469h1v1h-1zM1038,469h1v1h-1zM867,512h1v1h-1zM856,537h1v1h-1zM966,646h1v1h-1zM1021,523h1v1h-1zM871,500h1v1h-1zM1036,437h1v1h-1zM922,539h1v1h-1zM971,491h1v1h-1zM992,491h1v1h-1zM906,556h1v1h-1zM973,543h1v1h-1zM1014,497h1v1h-1zM1059,488h1v1h-1zM959,632h1v1h-1zM1014,522h1v1h-1zM968,545h1v1h-1zM892,491h1v1h-1zM971,560h1v1h-1zM889,537h1v1h-1zM1055,489h1v1h-1zM919,550h1v1h-1zM1019,508h1v1h-1zM868,505h1v1h-1zM868,599h1v1h-1zM918,553h1v1h-1zM917,526h1v1h-1zM1062,457h1v1h-1zM940,534h1v1h-1zM978,563h1v1h-1zM901,544h1v1h-1zM867,506h1v1h-1zM1009,500h1v1h-1zM1054,451h1v1h-1zM896,539h1v1h-1zM972,564h1v1h-1zM966,600h1v1h-1zM908,547h1v1h-1zM974,625h1v1h-1zM890,546h1v1h-1zM957,546h1v1h-1zM972,606h1v1h-1zM866,491h1v1h-1zM918,512h1v1h-1zM966,498h1v1h-1zM1082,469h1v1h-1zM928,536h1v1h-1zM881,515h1v1h-1zM1009,524h1v1h-1zM872,564h1v1h-1zM1035,473h1v1h-1zM860,593h1v1h-1zM1039,477h1v1h-1zM836,618h1v1h-1zM931,548h1v1h-1zM945,507h1v1h-1zM1061,461h1v1h-1zM972,598h1v1h-1zM1009,510h1v1h-1zM864,559h1v1h-1zM1013,490h1v1h-1zM964,603h1v1h-1zM853,526h1v1h-1zM854,546h1v1h-1zM1047,459h1v1h-1zM914,549h1v1h-1zM858,539h1v1h-1zM864,552h1v1h-1zM903,530h1v1h-1zM975,517h1v1h-1zM941,545h1v1h-1zM1032,518h1v1h-1zM1025,477h1v1h-1zM1042,466h1v1h-1zM856,549h1v1h-1zM882,559h1v1h-1zM1014,531h1v1h-1zM946,537h1v1h-1zM899,558h1v1h-1zM947,553h1v1h-1zM997,484h1v1h-1zM964,526h1v1h-1zM974,507h1v1h-1zM966,533h1v1h-1zM943,543h1v1h-1zM862,599h1v1h-1zM885,539h1v1h-1zM861,582h1v1h-1zM961,645h1v1h-1zM889,490h1v1h-1zM994,548h1v1h-1zM867,557h1v1h-1zM905,491h1v1h-1zM951,533h1v1h-1zM950,512h1v1h-1zM1027,504h1v1h-1zM950,494h1v1h-1zM935,550h1v1h-1zM975,498h1v1h-1zM850,573h1v1h-1zM1021,521h1v1h-1zM983,549h1v1h-1zM895,549h1v1h-1zM852,578h1v1h-1zM979,559h1v1h-1zM1027,509h1v1h-1zM975,540h1v1h-1zM910,520h1v1h-1zM900,508h1v1h-1zM964,493h1v1h-1zM973,599h1v1h-1zM856,578h1v1h-1zM953,534h1v1h-1zM967,516h1v1h-1zM910,498h1v1h-1zM989,516h1v1h-1zM879,532h1v1h-1zM950,514h1v1h-1zM1072,464h1v1h-1zM852,570h1v1h-1zM840,596h1v1h-1zM1000,514h1v1h-1zM949,531h1v1h-1zM977,519h1v1h-1zM962,557h1v1h-1zM961,540h1v1h-1zM936,511h1v1h-1zM1028,481h1v1h-1zM968,547h1v1h-1zM931,541h1v1h-1zM1078,473h1v1h-1zM966,575h1v1h-1zM931,526h1v1h-1zM932,509h1v1h-1zM1006,500h1v1h-1zM936,544h1v1h-1zM892,489h1v1h-1zM930,560h1v1h-1zM883,553h1v1h-1zM921,491h1v1h-1zM1033,513h1v1h-1zM999,523h1v1h-1zM1001,524h1v1h-1zM917,489h1v1h-1zM906,550h1v1h-1zM877,524h1v1h-1zM971,578h1v1h-1zM914,523h1v1h-1zM926,529h1v1h-1zM884,539h1v1h-1zM910,561h1v1h-1zM1042,459h1v1h-1zM915,506h1v1h-1zM858,520h1v1h-1zM915,541h1v1h-1zM847,586h1v1h-1zM1034,491h1v1h-1zM847,640h1v1h-1zM966,513h1v1h-1zM854,556h1v1h-1zM1041,459h1v1h-1zM860,585h1v1h-1zM920,552h1v1h-1zM991,533h1v1h-1zM1054,489h1v1h-1zM969,553h1v1h-1zM876,622h1v1h-1zM849,507h1v1h-1zM880,553h1v1h-1zM956,536h1v1h-1zM951,546h1v1h-1zM1019,529h1v1h-1zM862,514h1v1h-1zM984,642h1v1h-1zM840,585h1v1h-1zM883,528h1v1h-1zM840,580h1v1h-1zM1054,461h1v1h-1zM1006,501h1v1h-1zM964,544h1v1h-1zM954,552h1v1h-1zM961,615h1v1h-1zM1029,480h1v1h-1zM981,569h1v1h-1zM883,539h1v1h-1zM899,507h1v1h-1zM962,547h1v1h-1zM956,498h1v1h-1zM1038,477h1v1h-1zM919,548h1v1h-1zM943,556h1v1h-1zM924,515h1v1h-1zM1020,473h1v1h-1zM859,565h1v1h-1zM1026,525h1v1h-1zM874,602h1v1h-1zM933,534h1v1h-1zM892,548h1v1h-1zM856,506h1v1h-1zM1062,463h1v1h-1zM994,517h1v1h-1zM908,506h1v1h-1zM993,523h1v1h-1zM936,523h1v1h-1zM1087,476h1v1h-1zM902,522h1v1h-1zM910,512h1v1h-1zM969,486h1v1h-1zM927,559h1v1h-1zM896,519h1v1h-1zM984,514h1v1h-1zM1077,454h1v1h-1zM980,524h1v1h-1zM887,627h1v1h-1zM877,509h1v1h-1zM1006,506h1v1h-1zM1020,499h1v1h-1zM884,493h1v1h-1zM965,531h1v1h-1zM1068,467h1v1h-1zM990,493h1v1h-1zM936,536h1v1h-1zM909,514h1v1h-1zM861,560h1v1h-1zM1001,490h1v1h-1zM929,532h1v1h-1zM950,520h1v1h-1zM864,525h1v1h-1zM976,510h1v1h-1zM982,520h1v1h-1zM924,536h1v1h-1zM881,553h1v1h-1zM986,509h1v1h-1zM982,639h1v1h-1zM1008,500h1v1h-1zM950,544h1v1h-1zM846,629h1v1h-1zM993,536h1v1h-1zM941,489h1v1h-1zM997,512h1v1h-1zM837,618h1v1h-1zM920,538h1v1h-1zM988,482h1v1h-1zM977,511h1v1h-1zM967,537h1v1h-1zM1040,462h1v1h-1zM969,584h1v1h-1zM995,549h1v1h-1zM1068,474h1v1h-1zM1027,517h1v1h-1zM951,536h1v1h-1zM1072,465h1v1h-1zM867,564h1v1h-1zM898,530h1v1h-1zM970,498h1v1h-1zM850,589h1v1h-1zM1004,546h1v1h-1zM875,542h1v1h-1zM965,519h1v1h-1zM1045,489h1v1h-1zM1057,485h1v1h-1zM1029,494h1v1h-1zM944,537h1v1h-1zM904,522h1v1h-1zM851,520h1v1h-1zM1036,503h1v1h-1zM883,552h1v1h-1zM863,529h1v1h-1zM946,531h1v1h-1zM916,552h1v1h-1zM1008,507h1v1h-1zM1003,526h1v1h-1zM1021,519h1v1h-1zM873,514h1v1h-1zM943,509h1v1h-1zM958,592h1v1h-1zM990,526h1v1h-1zM986,557h1v1h-1zM861,558h1v1h-1zM1042,490h1v1h-1zM1025,496h1v1h-1zM842,619h1v1h-1zM899,501h1v1h-1zM1029,515h1v1h-1zM981,637h1v1h-1zM999,517h1v1h-1zM1016,482h1v1h-1zM885,487h1v1h-1zM903,539h1v1h-1zM933,553h1v1h-1zM871,524h1v1h-1zM869,577h1v1h-1zM1042,474h1v1h-1zM951,533h1v1h-1zM1021,515h1v1h-1z" fill="#2a66a8"/>
<rect x="722" y="515" width="14" height="1" fill="#9ab0a8"/>
<rect x="0" y="1072" width="1248" height="84" fill="#0e0d15"/>
<rect x="0" y="1072" width="1248" height="1" fill="#5a5a5c"/>
<rect x="343" y="1073" width="905" height="83" fill="#0b0b0d"/>
<rect x="343" y="1072" width="1" height="84" fill="#58585c"/>
<rect x="344" y="1073" width="904" height="20" fill="#0f0f10"/>
<rect x="344" y="1093" width="904" height="1" fill="#56565a"/>
<text font-family="Liberation Sans" font-size="16.6" fill="#969696" transform="translate(346,1087.2) scale(1.0,1)">1</text>
<rect x="482" y="1073" width="1" height="20" fill="#56565a"/>
<text font-family="Liberation Sans" font-size="16.6" fill="#969696" transform="translate(485,1087.2) scale(1.0,1)">51</text>
<rect x="621" y="1073" width="1" height="20" fill="#56565a"/>
<text font-family="Liberation Sans" font-size="16.6" fill="#969696" transform="translate(624,1087.2) scale(1.0,1)">101</text>
<rect x="760" y="1073" width="1" height="20" fill="#56565a"/>
<text font-family="Liberation Sans" font-size="16.6" fill="#969696" transform="translate(763,1087.2) scale(1.0,1)">151</text>
<rect x="899" y="1073" width="1" height="20" fill="#56565a"/>
<text font-family="Liberation Sans" font-size="16.6" fill="#969696" transform="translate(902,1087.2) scale(1.0,1)">201</text>
<rect x="1038" y="1073" width="1" height="20" fill="#56565a"/>
<text font-family="Liberation Sans" font-size="16.6" fill="#969696" transform="translate(1041,1087.2) scale(1.0,1)">251</text>
<rect x="1177" y="1073" width="1" height="20" fill="#56565a"/>
<text font-family="Liberation Sans" font-size="16.6" fill="#969696" transform="translate(1180,1087.2) scale(1.0,1)">301</text>
<rect x="379" y="1096" width="869" height="12" fill="#3a4a71"/>
<rect x="346" y="1096" width="32" height="12" fill="#5c5c5e"/>
<rect x="347" y="1097" width="30" height="10" fill="#434345"/>
<rect x="354" y="1102" width="2" height="2" fill="#6c6c6e"/><rect x="359" y="1102" width="2" height="2" fill="#6c6c6e"/><rect x="364" y="1102" width="2" height="2" fill="#6c6c6e"/>
<rect x="344" y="1110" width="904" height="1" fill="#5c5c60"/>
<rect x="344" y="1111" width="904" height="45" fill="#2e2f35"/>
<rect x="349" y="1114" width="30" height="42" fill="#64656b"/>
<rect x="350" y="1115" width="28" height="28" fill="#393b42"/>
<rect x="350" y="1144" width="28" height="12" fill="#393b42"/>
<path d="M360.2,1137.3 L367.2,1121.3" stroke="#8a8c98" stroke-width="1.3" fill="none" shape-rendering="geometricPrecision"/>
<text x="360.2" y="1162.5" font-family="Liberation Serif" font-size="18" fill="#9a9ca8">I</text>
<rect x="383" y="1114" width="103" height="27" fill="#64656b"/>
<rect x="384" y="1115" width="101" height="25" fill="#3a3026"/>
<rect x="385" y="1116" width="100" height="24" fill="#cb8849"/>
<text font-family="Liberation Sans" font-size="18.4" fill="#4c0e0e" transform="translate(389.6,1134.4) scale(1.065,1)">TimeCode</text>
<rect x="383" y="1142" width="103" height="14" fill="#64656b"/>
<rect x="384" y="1143" width="101" height="13" fill="#393b42"/>
<text font-family="Liberation Sans" font-size="18.4" fill="#a4a6b4" transform="translate(410.6,1164.4) scale(1.065,1)">Beats</text>
<rect x="488" y="1114" width="301" height="42" fill="#64656b"/>
<rect x="489" y="1115" width="299" height="41" fill="#000"/>
<text font-family="Liberation Sans" font-size="38" fill="#6f9ce6" text-anchor="middle" transform="translate(530.4,1159.4) scale(1.1,1)">0</text>
<text font-family="Liberation Sans" font-size="38" fill="#6f9ce6" text-anchor="middle" transform="translate(554.5,1159.4) scale(1.1,1)">0</text>
<text font-family="Liberation Sans" font-size="38" fill="#6f9ce6" text-anchor="middle" transform="translate(574.4,1159.4) scale(1.1,1)">:</text>
<text font-family="Liberation Sans" font-size="38" fill="#6f9ce6" text-anchor="middle" transform="translate(595.6,1159.4) scale(1.1,1)">0</text>
<text font-family="Liberation Sans" font-size="38" fill="#6f9ce6" text-anchor="middle" transform="translate(619,1159.4) scale(1.1,1)">0</text>
<text font-family="Liberation Sans" font-size="38" fill="#6f9ce6" text-anchor="middle" transform="translate(639.2,1159.4) scale(1.1,1)">:</text>
<text font-family="Liberation Sans" font-size="38" fill="#6f9ce6" text-anchor="middle" transform="translate(660.6,1159.4) scale(1.1,1)">0</text>
<text font-family="Liberation Sans" font-size="38" fill="#6f9ce6" text-anchor="middle" transform="translate(684,1159.4) scale(1.1,1)">7</text>
<text font-family="Liberation Sans" font-size="38" fill="#6f9ce6" text-anchor="middle" transform="translate(704.6,1159.4) scale(1.1,1)">:</text>
<text font-family="Liberation Sans" font-size="38" fill="#6f9ce6" text-anchor="middle" transform="translate(725.6,1159.4) scale(1.1,1)">3</text>
<text font-family="Liberation Sans" font-size="38" fill="#6f9ce6" text-anchor="middle" transform="translate(748,1159.4) scale(1.1,1)">4</text>
<rect x="791" y="1114" width="203" height="42" fill="#64656b"/>
<rect x="792" y="1115" width="201" height="41" fill="#000"/>
<text font-family="Liberation Sans" font-size="38" fill="#6f9ce6" text-anchor="middle" transform="translate(869.4,1159.4) scale(1.1,1)">4</text>
<text font-family="Liberation Sans" font-size="38" fill="#6f9ce6" text-anchor="middle" transform="translate(893.2,1159.4) scale(1.1,1)">5</text>
<text font-family="Liberation Sans" font-size="38" fill="#6f9ce6" text-anchor="middle" transform="translate(916.8,1159.4) scale(1.1,1)">4</text>
<rect x="997" y="1114" width="59" height="42" fill="#64656b"/>
<rect x="998" y="1115" width="57" height="41" fill="#393b42"/>
<rect x="1058" y="1114" width="59" height="42" fill="#64656b"/>
<rect x="1059" y="1115" width="57" height="41" fill="#393b42"/>
<rect x="1120" y="1114" width="59" height="42" fill="#64656b"/>
<rect x="1121" y="1115" width="57" height="41" fill="#393b42"/>
<rect x="1182" y="1114" width="58" height="42" fill="#64656b"/>
<rect x="1183" y="1115" width="56" height="41" fill="#c8854c"/>
<rect x="1244" y="1114" width="10" height="42" fill="#64656b"/>
<rect x="1245" y="1115" width="8" height="41" fill="#393b42"/>
<g shape-rendering="geometricPrecision" fill="#aeb2cc">
<rect x="1017.2" y="1136" width="2.4" height="15"/>
<path d="M1027.3,1136 V1151 L1019.8,1143.5Z"/><path d="M1035.3,1136 V1151 L1027.4,1143.5Z"/>
<rect x="1083" y="1136" width="3.2" height="15"/><rect x="1089" y="1136" width="3.2" height="15"/>
<path d="M1151,1136 V1151 L1143.3,1143.5Z"/>
<path d="M1207.3,1135.5 V1151 L1215.3,1143.2Z" fill="#420a0a"/>
</g>
<text x="0" y="0" font-family="Liberation Sans" font-size="18" fill="#7c9fe4" transform="translate(27,1097.5) scale(1.13,1)">1</text>
<text x="0" y="0" font-family="Liberation Sans" font-size="18" fill="#737376" transform="translate(130,1097.5) scale(1.13,1)">End:</text>
<text x="0" y="0" font-family="Liberation Sans" font-size="18" fill="#7c9fe4" transform="translate(221,1097.5) scale(1.13,1)">600</text>
<text x="0" y="0" font-family="Liberation Sans" font-size="18" fill="#7c9fe4" transform="translate(27,1120.5) scale(1.13,1)">1</text>
<text x="0" y="0" font-family="Liberation Sans" font-size="18" fill="#737376" transform="translate(130,1120.5) scale(1.13,1)">REnd:</text>
<text x="0" y="0" font-family="Liberation Sans" font-size="18" fill="#7c9fe4" transform="translate(221,1120.5) scale(1.13,1)">600</text>
<text x="0" y="0" font-family="Liberation Sans" font-size="18" fill="#7c9fe4" transform="translate(27,1143.5) scale(1.13,1)">60.0</text>
<text x="0" y="0" font-family="Liberation Sans" font-size="18" fill="#737376" transform="translate(130,1143.5) scale(1.13,1)">Tempo:</text>
<text x="0" y="0" font-family="Liberation Sans" font-size="18" fill="#7c9fe4" transform="translate(221,1143.5) scale(1.13,1)">120.0</text>
<text x="0" y="0" font-family="Liberation Sans" font-size="18" fill="#7c9fe4" transform="translate(27,1166.5) scale(1.13,1)">1</text>
<text x="0" y="0" font-family="Liberation Sans" font-size="18" fill="#737376" transform="translate(130,1166.5) scale(1.13,1)">T Sig:</text>
<text x="0" y="0" font-family="Liberation Sans" font-size="18" fill="#7c9fe4" transform="translate(221,1166.5) scale(1.13,1)">4</text>
<text x="0" y="0" font-family="Liberation Sans" font-size="18" fill="#7c9fe4" transform="translate(276,1166.5) scale(1.13,1)">4</text>
</svg>
</body></html>
